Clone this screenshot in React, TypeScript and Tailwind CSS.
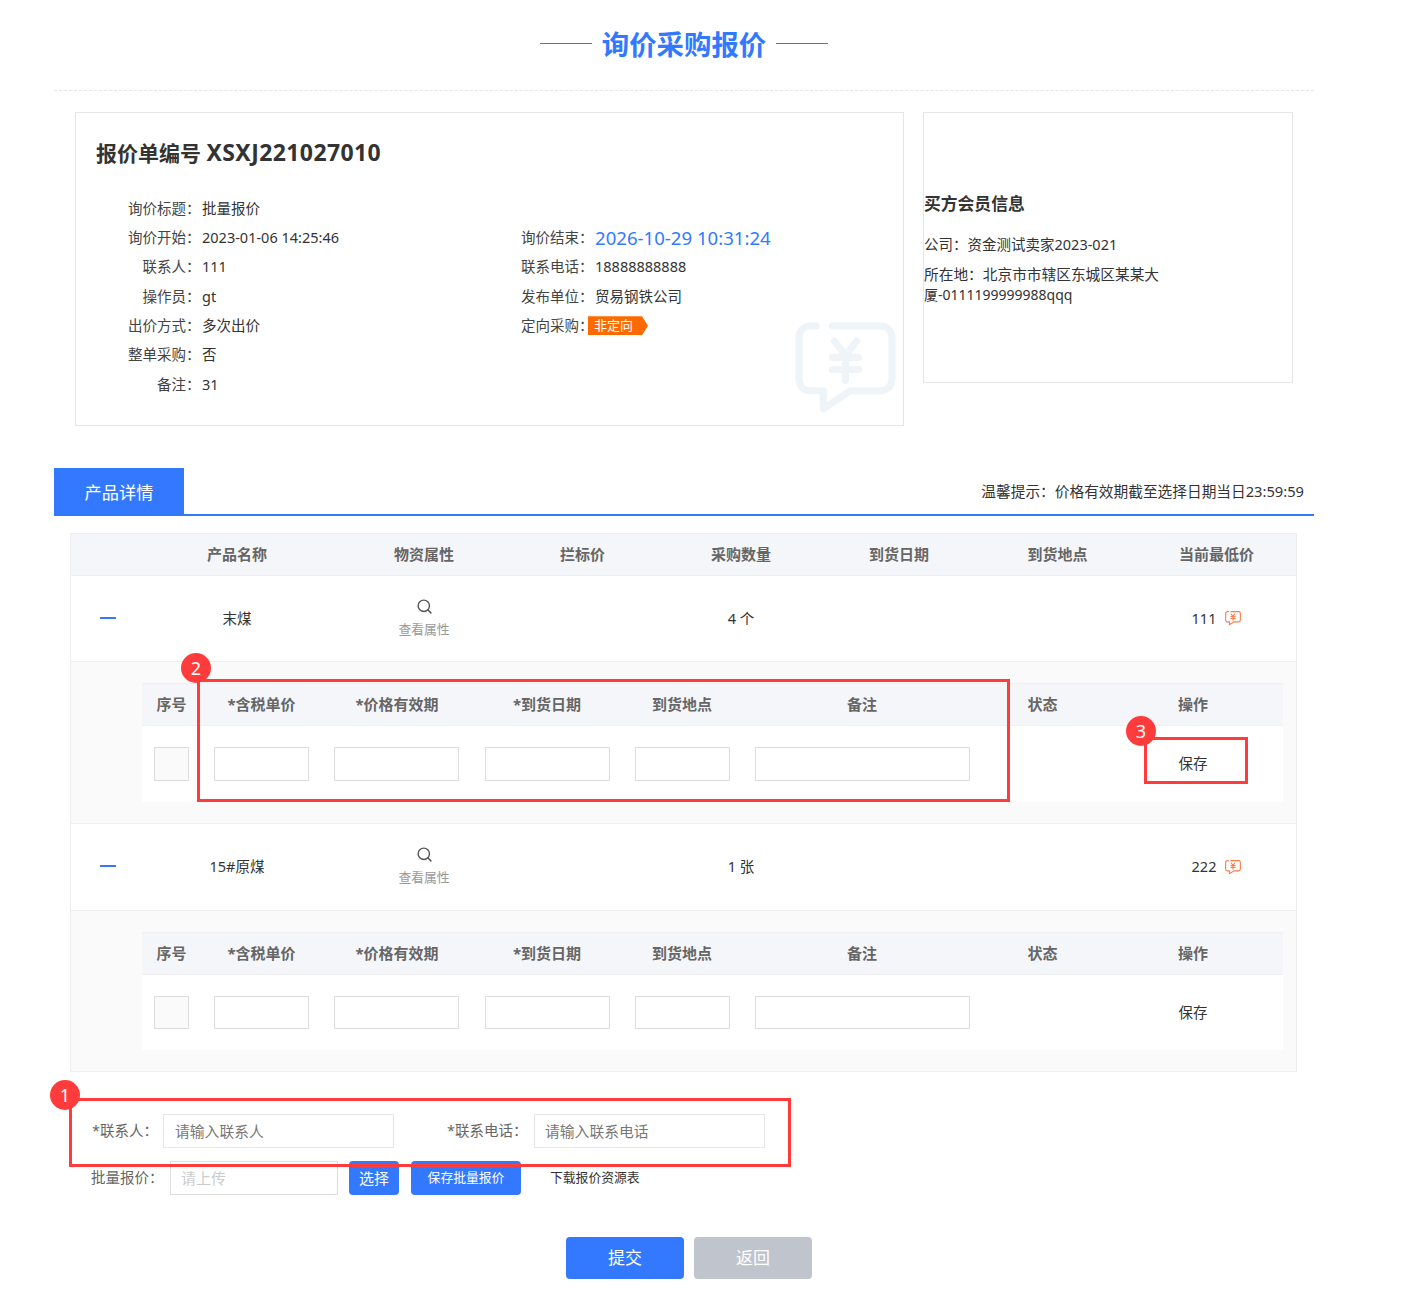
import { Search } from "lucide-react";

const blue = "bg-[#3379ff]";

const infoRows = [
	{ left: ["询价标题：", "批量报价"] },
	{ left: ["询价开始：", "2023-01-06 14:25:46"], right: ["询价结束：", "2026-10-29 10:31:24"] },
	{ left: ["联系人：", "111"], right: ["联系电话：", "18888888888"] },
	{ left: ["操作员：", "gt"], right: ["发布单位：", "贸易钢铁公司"] },
	{ left: ["出价方式：", "多次出价"], right: ["定向采购：", ""] },
	{ left: ["整单采购：", "否"] },
	{ left: ["备注：", "31"] },
];

const mainCols = ["", "产品名称", "物资属性", "拦标价", "采购数量", "到货日期", "到货地点", "当前最低价"];
const subCols = ["序号", "*含税单价", "*价格有效期", "*到货日期", "到货地点", "备注", "状态", "操作"];

function YuanBubble({ className, width }: { className: string; width: number }) {
	return (
		<svg viewBox="0 0 100 90" width={width} fill="none" stroke="currentColor" strokeWidth="7" strokeLinecap="round" strokeLinejoin="round" className={className}>
			<path d="M21 4H15A11 11 0 0 0 4 15V57A11 11 0 0 0 15 68H28V86L55 68H85A11 11 0 0 0 96 57V15A11 11 0 0 0 85 4H37" />
			<path d="M39 19L50 33L61 19M37 35H63M37 47H63M50 33V58" />
		</svg>
	);
}

function InfoCell({ label, value }: { label: string; value: string }) {
	const isTime = label === "询价结束：";
	const isTag = label === "定向采购：";
	return (
		<div className="flex items-center">
			<span className="w-[72.5px] whitespace-nowrap text-right text-[#444]">{label}</span>
			{isTag ? (
				<span className="ml-[-5.5px] flex h-[19px] w-[60px] items-center pl-[6px] text-[13px] text-white bg-[#ff6a00] [clip-path:polygon(0_0,90%_0,100%_50%,90%_100%,0_100%)]">
					非定向
				</span>
			) : (
				<span className={isTime ? "ml-[1.5px] text-[18.6px] text-[#3379ff]" : "ml-[1.5px] text-[#333]"}>{value}</span>
			)}
		</div>
	);
}

function ProductRow({ name, qty, price, rowH, bodyH, inputH }: { name: string; qty: string; price: string; rowH: string; bodyH: string; inputH: string }) {
	return (
		<>
			<div className={`grid grid-cols-[58px_216px_158px_159px_158px_158px_159px_159px] items-center border-b border-[#eee] bg-white text-center text-[#333] ${rowH}`}>
				<div className="flex justify-center">
					<span className="mb-[2px] ml-[16px] h-[2px] w-4 bg-[#3379ff]" />
				</div>
				<div>{name}</div>
				<div className="flex flex-col items-center text-[12.8px] text-[#999]">
					<Search size={17} strokeWidth={2} className="mb-[5px] text-[#555]" />
					查看属性
				</div>
				<div />
				<div>{qty}</div>
				<div />
				<div />
				<div className="flex items-center justify-center gap-[9px]">
					{price}
					<YuanBubble width={16} className="text-[#ff7a45]" />
				</div>
			</div>
			<div className="border-b border-[#eee] bg-[#fafafa] pb-[21px] pl-[71px] pr-[13px] pt-[21px] last:border-b-0">
				<div className="grid h-[43px] grid-cols-[59px_121px_150px_150px_120px_240px_121px_180px] items-center border-b border-t border-[#f0f0f0] bg-[#f5f6fa] text-center text-[15px] font-bold text-[#666]">
					{subCols.map((c) => (
						<div key={c}>{c}</div>
					))}
				</div>
				<div className={`grid grid-cols-[59px_121px_150px_150px_120px_240px_121px_180px] items-center bg-white ${bodyH}`}>
					<div className="flex justify-center">
						<div className={`w-[35px] border border-[#ddd] bg-[#fafafa] ${inputH}`} />
					</div>
					<div className="flex justify-center">
						<input className={`w-[95px] border border-[#ddd] ${inputH}`} />
					</div>
					<div className="flex justify-center">
						<input className={`mr-[1px] w-[125px] border border-[#ddd] ${inputH}`} />
					</div>
					<div className="flex justify-center">
						<input className={`w-[125px] border border-[#ddd] ${inputH}`} />
					</div>
					<div className="flex justify-center">
						<input className={`w-[95px] border border-[#ddd] ${inputH}`} />
					</div>
					<div className="flex justify-center">
						<input className={`w-[215px] border border-[#ddd] ${inputH}`} />
					</div>
					<div />
					<div className="text-center text-[#333]">保存</div>
				</div>
			</div>
		</>
	);
}

function Callout({ n, box, dot }: { n: number; box: string; dot: string }) {
	return (
		<>
			<div className={`absolute border-[3px] border-[#ff3b3b] ${box}`} />
			<div className={`absolute flex h-[30px] w-[30px] items-center justify-center rounded-full bg-[#ff3b3b] text-[18px] text-white ${dot}`}>{n}</div>
		</>
	);
}

export default function App() {
	return (
		<div className="relative h-[1302px] w-[1415px] overflow-hidden bg-white font-['Noto_Sans','Noto_Sans_CJK_SC',sans-serif] text-[14.5px]">
			<div className="ml-[54px] w-[1260px]">
				{/* page title */}
				<div className="flex h-[91px] items-start justify-center border-b border-dashed border-[#e6e6e6] pt-[24px]">
					<div className="flex h-[39px] items-center gap-[10px]">
						<span className="h-px w-[52px] bg-[#3379ff]" />
						<h1 className="mt-[2px] text-[27.4px] leading-[39px] font-bold text-[#3379ff]">询价采购报价</h1>
						<span className="h-px w-[52px] bg-[#3379ff]" />
					</div>
				</div>

				{/* quote info + buyer info */}
				<div className="ml-[21px] mt-[21px] flex items-start gap-[19px]">
					<div className="relative h-[314px] w-[829px] border border-[#e6e6e6] pt-[24px]">
						<div className="pl-[20px] text-[21px] leading-[30px] font-bold text-[#333]">
							报价单编号 <span className="text-[23px] tracking-[0.4px]">XSXJ221027010</span>
						</div>
						<div className="mt-[26px]">
							{infoRows.map((row, i) => (
								<div key={i} className="grid h-[29.3px] grid-cols-[393px_1fr] items-center pl-[52px]">
									<InfoCell label={row.left[0]} value={row.left[1]} />
									{row.right ? <InfoCell label={row.right[0]} value={row.right[1]} /> : <div />}
								</div>
							))}
						</div>
						<YuanBubble width={101} className="absolute left-[719px] top-[209px] text-[#eff4f9]" />
					</div>
					<div className="h-[271px] w-[370px] border border-[#e6e6e6] pt-[79px] text-[#333]">
						<div className="text-[16.8px] leading-6 font-bold">买方会员信息</div>
						<div className="mt-[18px] leading-5">公司：资金测试卖家2023-021</div>
						<div className="mt-[10px] text-[14.7px] leading-5">
							所在地：北京市市辖区东城区某某大
							<br />
							<span className="text-[14px]">厦-0111199999988qqq</span>
						</div>
					</div>
				</div>

				{/* tab bar */}
				<div className="mt-[42px] flex items-end justify-between border-b-2 border-[#3379ff]">
					<div className={`flex h-[46px] w-[130px] items-center justify-center pt-[4px] text-[17.2px] text-white ${blue}`}>产品详情</div>
					<div className="pb-[12px] pr-[10px] text-[14.7px] text-[#333]">温馨提示：价格有效期截至选择日期当日23:59:59</div>
				</div>

				{/* product table */}
				<div className="ml-[16px] mt-[17px] w-[1227px] border border-[#eee]">
					<div className="grid h-[42px] grid-cols-[58px_216px_158px_159px_158px_158px_159px_159px] items-center border-b border-[#eee] bg-[#f5f6fa] text-center text-[15px] font-bold text-[#666]">
						{mainCols.map((c) => (
							<div key={c}>{c}</div>
						))}
					</div>
					<ProductRow name="末煤" qty="4 个" price="111" rowH="h-[86px]" bodyH="h-[76px]" inputH="h-[34px]" />
					<ProductRow name="15#原煤" qty="1 张" price="222" rowH="h-[87px]" bodyH="h-[75px]" inputH="h-[33px]" />
				</div>

				{/* contact form */}
				<div className="ml-[38px] mt-[42px] flex items-center text-[#666]">
					<span className="w-[58px] whitespace-nowrap">*联系人：</span>
					<input placeholder="请输入联系人" className="ml-[13px] h-[34px] w-[231px] border border-[#e6e6e6] px-[11px] text-[14.8px] placeholder:text-[#777]" />
					<span className="ml-[53px] w-[73px] whitespace-nowrap">*联系电话：</span>
					<input placeholder="请输入联系电话" className="ml-[14px] h-[34px] w-[231px] border border-[#e6e6e6] px-[10px] text-[14.8px] placeholder:text-[#777]" />
				</div>
				<div className="ml-[37px] mt-[13px] flex items-center text-[#666]">
					<span className="w-[66px] whitespace-nowrap">批量报价：</span>
					<input placeholder="请上传" className="ml-[13px] h-[34px] w-[168px] border border-[#ddd] px-[10px] text-[15px] placeholder:text-[#ccc]" />
					<button className={`ml-[11px] h-[34px] w-[50px] rounded text-[15px] text-white ${blue}`}>选择</button>
					<button className={`ml-[12px] h-[34px] w-[110px] rounded text-[12.8px] text-white ${blue}`}>保存批量报价</button>
					<span className="ml-[29px] text-[12.8px] text-[#333]">下载报价资源表</span>
				</div>
				<div className="ml-[512px] mt-[42px] flex gap-[10px]">
					<button className={`h-[42px] w-[118px] rounded text-[17px] text-white ${blue}`}>提交</button>
					<button className="h-[42px] w-[118px] rounded bg-[#c0c4cc] text-[17px] text-white">返回</button>
				</div>
			</div>

			{/* red annotations */}
			<Callout n={2} box="left-[197px] top-[679px] h-[123px] w-[813px]" dot="left-[181px] top-[653px]" />
			<Callout n={3} box="left-[1144px] top-[737px] h-[47px] w-[104px]" dot="left-[1126px] top-[716px]" />
			<Callout n={1} box="left-[69px] top-[1098px] h-[69px] w-[722px]" dot="left-[50px] top-[1080px]" />
		</div>
	);
}
